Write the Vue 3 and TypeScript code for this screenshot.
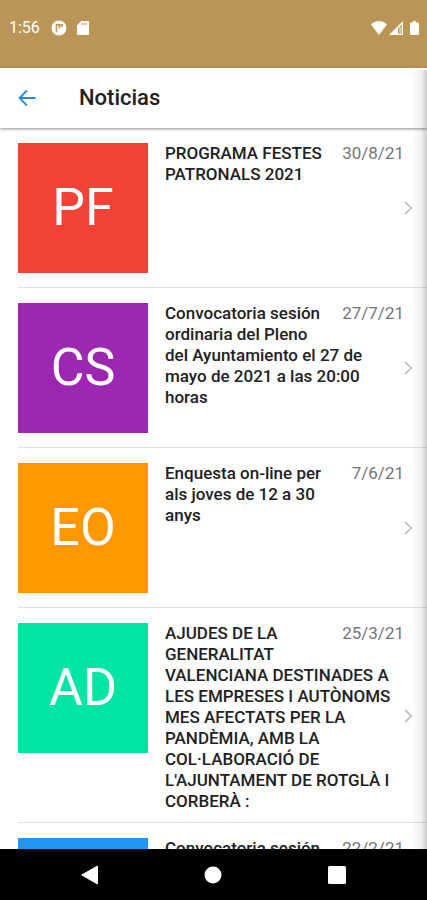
<script setup lang="ts">
interface NewsItem {
  id: number
  initials: string
  tone: string
  title: string
  date: string
}

const news: NewsItem[] = [
  { id: 1, initials: 'PF', tone: 'red', title: 'PROGRAMA FESTES PATRONALS 2021', date: '30/8/21' },
  { id: 2, initials: 'CS', tone: 'purple', title: 'Convocatoria sesión ordinaria del Pleno del Ayuntamiento el 27 de mayo de 2021 a las 20:00 horas', date: '27/7/21' },
  { id: 3, initials: 'EO', tone: 'orange', title: 'Enquesta on-line per als joves de 12 a 30 anys', date: '7/6/21' },
  { id: 4, initials: 'AD', tone: 'green', title: "AJUDES DE LA GENERALITAT VALENCIANA DESTINADES A LES EMPRESES I AUTÒNOMS MES AFECTATS PER LA PANDÈMIA, AMB LA COL·LABORACIÓ DE L'AJUNTAMENT DE ROTGLÀ I CORBERÀ :", date: '25/3/21' },
  { id: 5, initials: '', tone: 'blue', title: 'Convocatoria sesión', date: '22/2/21' },
]
</script>

<template>
  <div class="screen">
    <div class="status">
      <span class="clock">1:56</span>
      <svg class="app-icon" width="16" height="16" viewBox="0 0 16 16">
        <circle cx="8" cy="8" r="7.5" fill="#fff" />
        <path d="M5.400 12.200V4.800h3v3.600" fill="none" stroke="#bb9556" stroke-width="1.500" />
        <path d="M9.400 4h2.400v2.800H9.400z" fill="#bb9556" />
      </svg>
      <svg class="card-icon" width="12" height="14" viewBox="0 0 12 14">
        <path d="M4.3 0H11a1 1 0 0 1 1 1v12a1 1 0 0 1-1 1H1a1 1 0 0 1-1-1V4.3z" fill="#fff" />
        <path d="M5 1.8v2.200M7.2 1.8v2.200M9.4 1.8v2.200" stroke="#bb9556" stroke-width="1" />
      </svg>
      <span class="fill"></span>
      <svg width="16" height="14" viewBox="0 0 16 14">
        <path d="M8 14L0 3.6C2.2 1.2 5 0 8 0s5.800 1.200 8 3.600z" fill="#fff" />
      </svg>
      <svg class="signal" width="14" height="14" viewBox="0 0 14 14">
        <path d="M14 0v14H0z" fill="#fff" />
        <path d="M9 7.200L12.700 3.500v9.200H9z" fill="#bb9556" />
        <path d="M11 6v6.700" stroke="#fff" stroke-width="1" />
      </svg>
      <svg class="battery" width="9" height="14" viewBox="0 0 9 14">
        <path d="M3 0h3v1.400h2a1 1 0 0 1 1 1V13a1 1 0 0 1-1 1H1a1 1 0 0 1-1-1V2.400a1 1 0 0 1 1-1h2z" fill="#fff" />
      </svg>
    </div>

    <div class="view">
      <header class="navbar">
        <button class="back" type="button" aria-label="Volver">
          <svg width="18" height="18" viewBox="0 0 18 18" fill="none" stroke="#2589e5" stroke-width="1.800">
            <path d="M17.500 9H1.500M9 1.500L1.500 9 9 16.500" />
          </svg>
        </button>
        <h1>Noticias</h1>
      </header>

      <main class="content">
        <ul class="list">
          <li v-for="item in news" :key="item.id">
            <a class="row" href="#">
              <span class="thumb" :class="item.tone">{{ item.initials }}</span>
              <span class="text">
                <span class="date">{{ item.date }}</span>
                <span class="title">{{ item.title }}</span>
              </span>
              <svg class="chevron" width="9" height="14" viewBox="0 0 9 14" fill="none" stroke="#c4c4c4" stroke-width="1.800">
                <path d="M1 1l6.300 6L1 13" />
              </svg>
            </a>
          </li>
        </ul>
      </main>
      <div class="edge-shadow"></div>
    </div>

    <nav class="system">
      <button type="button" aria-label="Atrás">
        <svg width="18" height="20" viewBox="0 0 18 20"><path d="M16.500 1v18L.8 10z" fill="#fff" stroke="#fff" stroke-linejoin="round" /></svg>
      </button>
      <button type="button" aria-label="Inicio">
        <svg width="18" height="18" viewBox="0 0 18 18"><circle cx="9" cy="9" r="8.500" fill="#fff" /></svg>
      </button>
      <button type="button" aria-label="Recientes">
        <svg width="18" height="18" viewBox="0 0 18 18"><rect width="18" height="18" rx="1.500" fill="#fff" /></svg>
      </button>
    </nav>
  </div>
</template>

<style>
body {
  background: #fff;
}
</style>

<style scoped>
* {
  box-sizing: border-box;
}
.screen {
  display: flex;
  flex-direction: column;
  height: 100vh;
  overflow: hidden;
  font-family: Roboto, "Liberation Sans", sans-serif;
  color: #212121;
}
button {
  display: flex;
  align-items: center;
  justify-content: center;
  padding: 0;
  border: 0;
  background: none;
}
.status {
  flex: none;
  display: flex;
  align-items: center;
  height: 68px;
  padding: 0 8px 12px 9px;
  background: #bb9556;
  color: #fff;
}
.clock {
  font-size: 16px;
  line-height: 20px;
}
.app-icon {
  margin-left: 11px;
}
.card-icon {
  margin-left: 10px;
}
.fill {
  flex: 1;
}
.signal {
  margin-left: 2px;
}
.battery {
  margin-left: 7px;
}
.view {
  position: relative;
  flex: 1;
  min-height: 0;
  display: flex;
  flex-direction: column;
}
.navbar {
  position: relative;
  flex: none;
  display: flex;
  align-items: center;
  height: 60px;
  padding-left: 18px;
  background: #fff;
  box-shadow: 0 1px 3px rgba(0, 0, 0, 0.45);
}
.back {
  width: 18px;
  height: 40px;
}
h1 {
  margin: 0 0 0 43px;
  font-size: 22px;
  font-weight: 500;
  line-height: 28px;
}
.content {
  flex: 1;
  min-height: 0;
  overflow: hidden;
}
.list {
  margin: 0;
  padding: 0 0 0 18px;
  list-style: none;
}
.row {
  display: flex;
  align-items: flex-start;
  padding: 15px 14px 10px 0;
  border-bottom: 1px solid #e0e0e0;
  color: inherit;
  text-decoration: none;
}
.thumb {
  flex: none;
  display: flex;
  align-items: center;
  justify-content: center;
  width: 130px;
  height: 130px;
  margin-bottom: 4px;
  color: #fff;
  font-size: 52px;
  line-height: 60px;
}
.red { background: #f44336; }
.purple { background: #9c27b0; }
.orange { background: #ff9800; }
.green { background: #00e5a4; }
.blue { background: #2196f3; }
.text {
  flex: 1;
  min-width: 0;
  margin-left: 17px;
  font-size: 17px;
  line-height: 21px;
}
.title {
  font-weight: 500;
}
.date {
  float: right;
  height: 42px;
  margin-left: 12px;
  color: #757575;
}
.chevron {
  flex: none;
  align-self: center;
  margin-bottom: 4px;
}
.edge-shadow {
  position: absolute;
  top: 2px;
  right: 0;
  bottom: 0;
  width: 16px;
  background: linear-gradient(to right, rgba(0, 0, 0, 0), rgba(0, 0, 0, 0.05) 60%, rgba(0, 0, 0, 0.2));
  pointer-events: none;
}
.system {
  position: relative;
  flex: none;
  display: grid;
  grid-template-columns: repeat(3, 1fr);
  height: 51px;
  padding: 0 28px;
  background: #000;
}
</style>
